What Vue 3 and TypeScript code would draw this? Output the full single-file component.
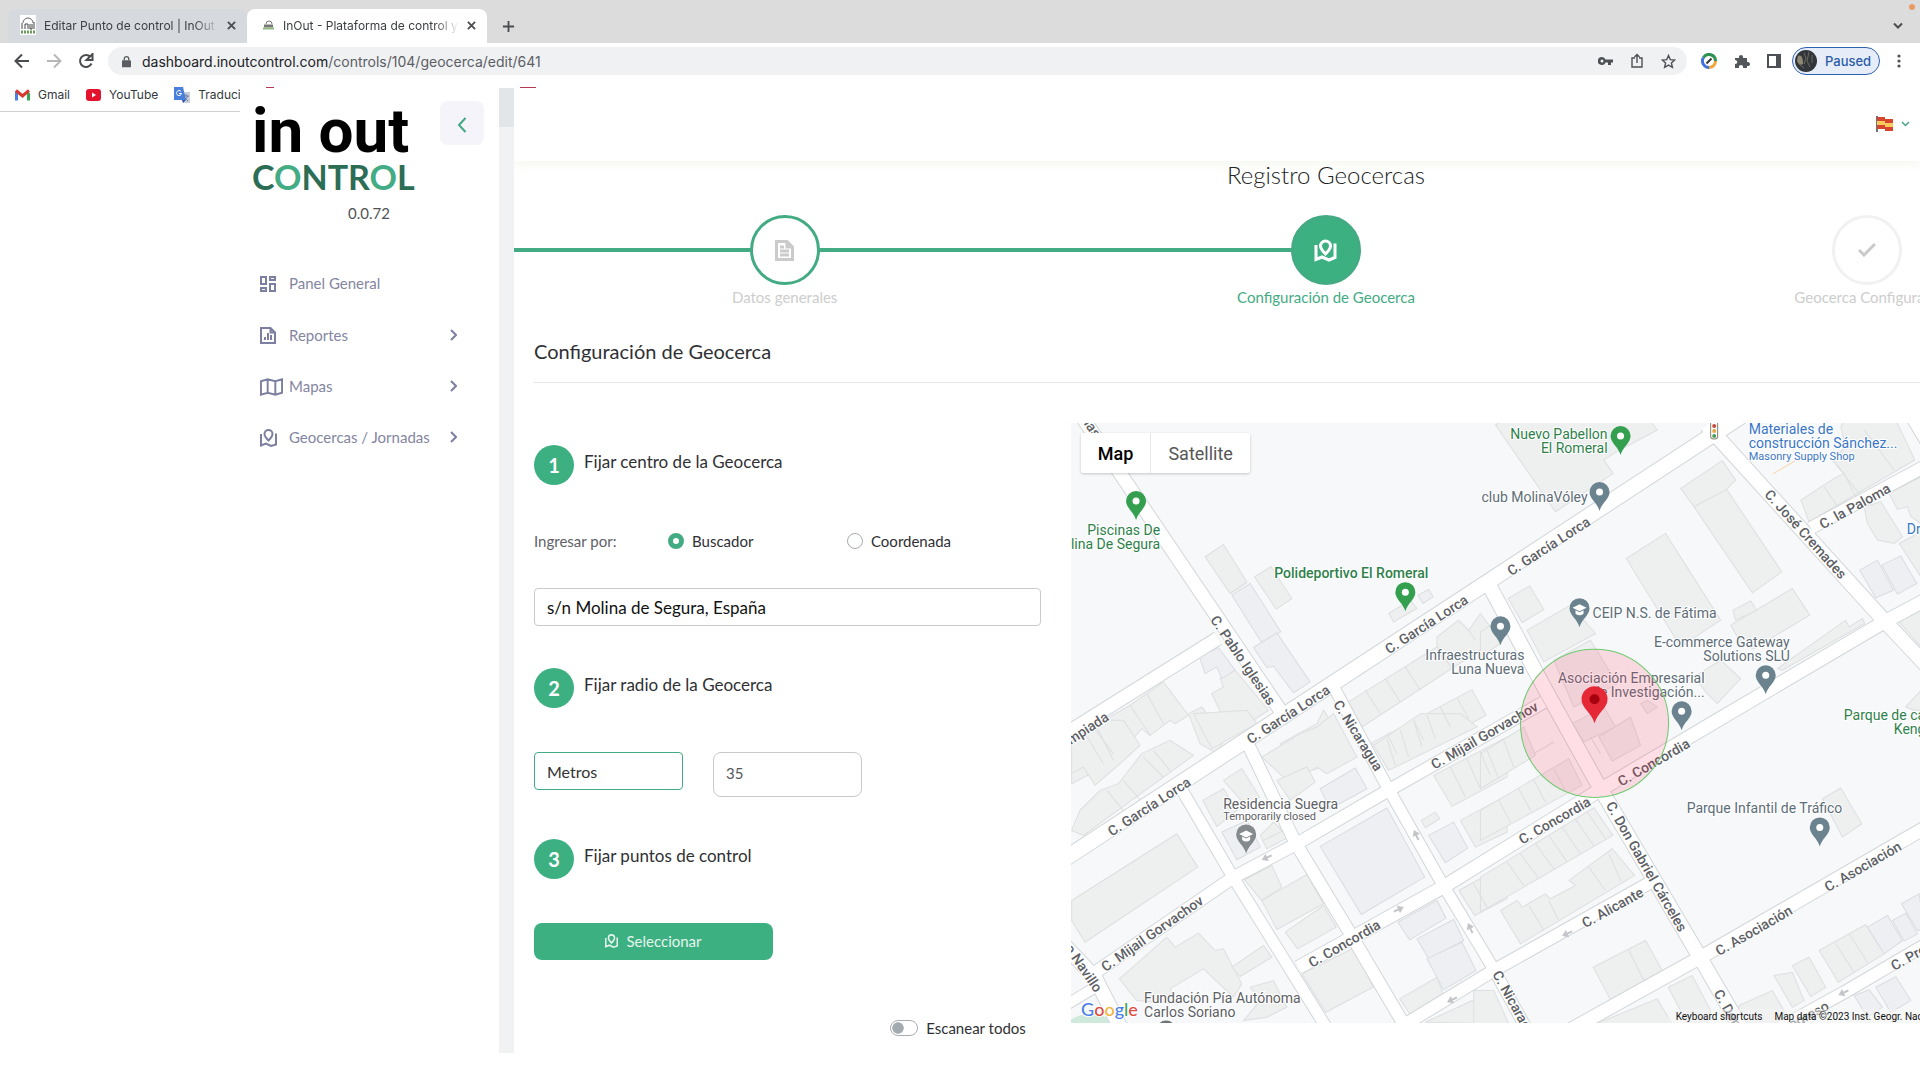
<script setup lang="ts">
import { ref } from 'vue'

interface Shape { x: number; y: number; items: string[] }
interface Label { x: number; y: number; text: string; tone: string; anchor?: string }
interface Street { x: number; y: number; a: number; text: string; anchor?: string }
interface Pin { x: number; y: number; color: string; school?: boolean }

const entryMode = ref('buscador')
const address = ref('s/n Molina de Segura, España')
const radius = ref('35')
const scanAll = ref(false)

const menu = [
  { text: 'Panel General', icon: 'panel', more: false },
  { text: 'Reportes', icon: 'report', more: true },
  { text: 'Mapas', icon: 'map', more: true },
  { text: 'Geocercas / Jornadas', icon: 'fence', more: true },
]

const steps = [
  { text: 'Datos generales', state: 'done' },
  { text: 'Configuración de Geocerca', state: 'current' },
  { text: 'Geocerca Configurada', state: 'pending' },
]

const roads: { d: string; w: number }[] = [
  { d: 'M1080 414L1280 710', w: 13 },
  { d: 'M1218 638L1060 737', w: 13 },
  { d: 'M1246 740L1295 842L1350 933L1406 1028', w: 12 },
  { d: 'M1333 686L1385 783L1440 880L1493 968L1527 1030', w: 11 },
  { d: 'M1182 790L1233 877L1328 1030', w: 11 },
  { d: 'M1060 940L1095 977L1122 1030', w: 14 },
  { d: 'M1060 1008L1098 985', w: 10 },
  { d: 'M1095 972L1233 877L1297 843L1388 790L1543 702', w: 12 },
  { d: 'M1298 967L1442 887L1602 788L1720 718L1883 622L1930 597', w: 13 },
  { d: 'M1487 582L1548 695L1598 785L1697 953L1742 1030', w: 14 },
  { d: 'M1648 883L1493 970L1396 1029', w: 12 },
  { d: 'M1930 824L1703 955L1570 1029', w: 13 },
  { d: 'M1930 941L1843 992L1774 1030', w: 12 },
  { d: 'M1706 425L1883 620L1930 670', w: 14 },
  { d: 'M1810 528L1930 463', w: 12 },
  { d: 'M1905 408L1935 458', w: 11 },
  { d: 'M1050 868L1487 582L1750 410', w: 15 },
]

const buildings: Shape[] = [
  { x: 1060, y: 410, items: [
    '435,440 490,403 560,515 510,550', '583,500 632,470 695,565 648,597', '985,610 1050,570 1070,595 1000,635',
    '455,850 490,830 480,805 525,780 625,900 525,965 495,935', '385,910 425,890 495,985 470,1030 420,1000',
    '865,875 1130,710 1130,680 1195,630 1225,660 1260,610 1290,650 1290,700 905,950', '930,1000 1235,838 1277,915 1050,1040',
    '35,985 210,885 310,815 385,915 345,940 330,930 270,975 245,955 215,990 190,1040 35,1120', '660,1000 770,940 790,900 830,960 890,1040 720,1090',
  ] },
  { x: 1480, y: 410, items: [
    '45,45 90,20 500,20 530,60 400,130 370,150 398,190 225,305', '600,235 725,152 765,210 738,238 903,485 815,548 640,290',
    '437,445 555,370 720,630 600,710', '750,645 935,535 987,615 820,715 785,705', '757,600 810,572 828,600 765,630',
    '83,565 148,527 190,598 125,637', '140,660 270,585 345,670 190,755', '220,750 330,690 410,820 280,890',
    '890,775 1095,630 1105,650 1145,625 1152,640 905,780', '960,270 1060,205 1090,190 1055,150 1095,110 1080,50 1100,20 1240,20 1302,150 985,335',
    '1150,290 1200,275 1265,380 1240,400 1190,390 1160,340', '1225,250 1320,200 1320,340 1290,320 1280,290 1250,298',
    '1255,400 1330,360 1330,510 1320,500', '1250,630 1330,590 1330,720', '640,800 720,750 780,805 710,880 680,850',
    '1275,890 1320,840 1330,900 1300,900', '0,665 40,640 60,700 0,740', '275,940 370,890 405,950 310,995', '480,880 500,870 530,890 500,910',
  ] },
  { x: 1060, y: 720, items: [
    '35,540 350,340 413,440 75,665 35,600', '490,180 545,145 598,230 560,260', '428,240 490,205 530,270 470,318',
    '600,345 640,305 685,350 620,385', '605,110 720,40 770,20 820,-20 890,110 800,160 770,140 690,190',
    '650,180 740,140 765,185 690,240', '553,478 635,435 665,500 605,540', '605,540 740,462 790,550 650,627', '675,635 790,555 828,620 712,685',
    '725,760 885,680 938,800 797,875', '178,775 320,650 345,680 415,638 465,690 490,685 545,790 520,830 430,745 330,805 350,850 230,840',
    '515,740 610,675 635,710 540,768', '1018,835 1130,770 1148,820 1048,880', '1083,300 1125,275 1138,295 1095,322',
    '1120,165 1340,50 1340,170 1175,258', '1200,300 1340,225 1340,335 1245,380', '1195,510 1340,430 1340,535 1243,585',
    '1095,905 1290,815 1320,870 1320,910', '940,75 1080,-20 1200,-20 1250,20 985,150', '35,330 60,270 120,210 175,190 245,100 330,60 400,105 70,345',
    '35,70 100,0 190,0 240,75 180,130 105,195 70,140 35,160', '400,-20 455,85 590,10 560,-30', '550,900 600,840 570,800 640,780 680,860 620,890',
  ] },
  { x: 1480, y: 720, items: [
    '60,570 110,540 125,560 195,520 210,535 285,495 265,480 395,385 462,465 120,670', '0,470 340,262 397,345 0,575',
    '0,270 265,115 305,195 0,360', '0,100 130,20 165,105 0,205', '338,740 495,660 545,750 390,838', '563,800 635,765 690,870 680,910 620,910',
    '345,910 530,835 575,910', '-20,810 40,810 85,910 -20,910', '1025,235 1080,203 1143,310 1085,350', '880,765 935,755 970,840 935,860',
    '935,735 985,710 1035,800 990,828', '1015,690 1155,612 1210,700 1073,785', '775,855 875,810 910,870 900,910 775,910', '355,50 450,-10 480,75 395,122',
  ] },
]

const coolBuildings: Shape[] = [
  { x: 1060, y: 410, items: ['515,555 570,520 662,665 605,698', '580,712 650,668 750,815 700,848 640,768 620,772', '1073,555 1105,538 1118,560 1088,580', '418,740 475,712 525,780 485,805 470,770 435,790'] },
  { x: 1480, y: 410, items: ['1137,480 1190,450 1238,540 1185,563', '1203,465 1260,437 1308,520 1250,552'] },
  { x: 1060, y: 720, items: ['780,378 980,263 1093,470 903,582', '485,335 560,300 600,380 530,418', '780,205 885,143 920,205 810,265', '1013,605 1130,540 1157,593 1048,658', '1070,655 1180,597 1210,660 1105,715', '1100,715 1205,665 1247,750 1150,808', '1105,345 1180,305 1222,383 1155,427'] },
  { x: 1480, y: 720, items: ['1160,620 1220,585 1265,660 1210,700', '1235,600 1275,578 1310,640 1270,662', '1262,550 1315,520 1330,625 1310,630', '1185,800 1245,768 1290,840 1230,875', '1120,825 1165,808 1205,860 1160,890'] },
]

const lots: Shape[] = [
  { x: 1060, y: 410, items: ['M915 840l45 70M975 805l45 70M1035 770l45 70M1130 710l45 65M1225 660l20 30M980 970l30 60M1060 930l30 60M1140 890l30 60M1190 862l35 65M210 885l60 90M260 850l50 90M100 950l60 80M510 550l50-32'] },
  { x: 1480, y: 410, items: ['M640 290l98-52M1030 230l45 65M1090 190l35 70M1055 150l80 100M1150 60l90 120'] },
  { x: 1060, y: 720, items: ['M980 55l25 80M1020 30l25 80M1060 0l25 80M1100-15l25 70M1170 140l45 90M1220 115l40 90M1260 95l30 70M1240 490l40 70M100 0l60 120M70 30l60 100M140 210l50 60M190 180l60 70M250 110l60 60M280 90l50 60M610 360l60-30'] },
  { x: 1480, y: 720, items: ['M80 425l50 70M120 400l55 75M165 370l55 75M205 345l55 80M245 320l55 80M285 297l55 80M320 275l55 80M55 240l35 65M115 205l35 65M160 180l35 65M220 145l35 65M20 90l35 85M70 60l30 80M145 555l45 75M205 540l30 60M325 440l50 70M385 400l35 80M445 690l45 90M1065 670l55 85M1105 640l55 85M330 50l30 50M160 100l60-35'] },
]

const arrows = [
  [1267, 857, 155], [1416, 835, 245], [1398, 909, -25], [1470, 928, 245], [1452, 999, 155], [1567, 933, 155], [1843, 992, 155],
]

const placeLabels: Label[] = [
  { x: 1160, y: 535, text: 'Piscinas De', tone: 'green', anchor: 'end' },
  { x: 1160, y: 549, text: 'lina De Segura', tone: 'green', anchor: 'end' },
  { x: 1274, y: 578, text: 'Polideportivo El Romeral', tone: 'green strong' },
  { x: 1607, y: 439, text: 'Nuevo Pabellon', tone: 'green', anchor: 'end' },
  { x: 1607, y: 453, text: 'El Romeral', tone: 'green', anchor: 'end' },
  { x: 1587, y: 502, text: 'club MolinaVóley', tone: 'slate', anchor: 'end' },
  { x: 1748, y: 434, text: 'Materiales de', tone: 'blue' },
  { x: 1748, y: 448, text: 'construcción Sánchez...', tone: 'blue' },
  { x: 1748, y: 460, text: 'Masonry Supply Shop', tone: 'blue small' },
  { x: 1906, y: 534, text: 'Dr', tone: 'blue' },
  { x: 1592, y: 618, text: 'CEIP N.S. de Fátima', tone: 'slate' },
  { x: 1789, y: 647, text: 'E-commerce Gateway', tone: 'slate', anchor: 'end' },
  { x: 1789, y: 661, text: 'Solutions SLU', tone: 'slate', anchor: 'end' },
  { x: 1704, y: 683, text: 'Asociación Empresarial', tone: 'slate', anchor: 'end' },
  { x: 1704, y: 697, text: 'de Investigación...', tone: 'slate', anchor: 'end' },
  { x: 1524, y: 660, text: 'Infraestructuras', tone: 'slate', anchor: 'end' },
  { x: 1524, y: 674, text: 'Luna Nueva', tone: 'slate', anchor: 'end' },
  { x: 1843, y: 720, text: 'Parque de ca', tone: 'green' },
  { x: 1893, y: 734, text: 'Keng', tone: 'green' },
  { x: 1223, y: 809, text: 'Residencia Suegra', tone: 'grey' },
  { x: 1223, y: 820, text: 'Temporarily closed', tone: 'grey small' },
  { x: 1686, y: 813, text: 'Parque Infantil de Tráfico', tone: 'slate' },
  { x: 1144, y: 1002, text: 'Fundación Pía Autónoma', tone: 'grey' },
  { x: 1144, y: 1016, text: 'Carlos Soriano', tone: 'grey' },
]

const streetLabels: Street[] = [
  { x: 1149, y: 806, a: -33, text: 'C. García Lorca' },
  { x: 1288, y: 714, a: -33, text: 'C. García Lorca' },
  { x: 1426, y: 624, a: -33, text: 'C. García Lorca' },
  { x: 1548, y: 546, a: -33, text: 'C. García Lorca' },
  { x: 1243, y: 660, a: 56, text: 'C. Pablo Iglesias' },
  { x: 1098, y: 436, a: 56, text: 'C. Pablo Iglesias', anchor: 'end' },
  { x: 1358, y: 735, a: 58, text: 'C. Nicaragua' },
  { x: 1496, y: 971, a: 61, text: 'C. Nicaragua', anchor: 'start' },
  { x: 1152, y: 933, a: -35, text: 'C. Mijail Gorvachov' },
  { x: 1484, y: 735, a: -30, text: 'C. Mijail Gorvachov' },
  { x: 1344, y: 943, a: -30, text: 'C. Concordia' },
  { x: 1554, y: 820, a: -30, text: 'C. Concordia' },
  { x: 1653, y: 762, a: -30, text: 'C. Concordia' },
  { x: 1646, y: 866, a: 60, text: 'C. Don Gabriel Cárceles' },
  { x: 1717, y: 990, a: 60, text: 'C. Don Gabriel Cárceles', anchor: 'start' },
  { x: 1612, y: 907, a: -29, text: 'C. Alicante' },
  { x: 1753, y: 930, a: -30, text: 'C. Asociación' },
  { x: 1862, y: 866, a: -30, text: 'C. Asociación' },
  { x: 1805, y: 534, a: 48, text: 'C. José Cremades' },
  { x: 1854, y: 506, a: -29, text: 'C. la Paloma' },
  { x: 1107, y: 715, a: -33, text: 'C. Olimpiada', anchor: 'end' },
  { x: 1099, y: 990, a: 56, text: 'Pedro Navillo', anchor: 'end' },
  { x: 1827, y: 1004, a: -28, text: 'C. Progreso', anchor: 'end' },
  { x: 1891, y: 966, a: -29, text: 'C. Progreso', anchor: 'start' },
]

const pins: Pin[] = [
  { x: 1136, y: 520, color: '#34a04f' },
  { x: 1405, y: 611, color: '#34a04f' },
  { x: 1620, y: 455, color: '#34a04f' },
  { x: 1599, y: 511, color: '#6b838e' },
  { x: 1579, y: 627, color: '#6b838e', school: true },
  { x: 1500, y: 645, color: '#6b838e' },
  { x: 1765, y: 694, color: '#6b838e' },
  { x: 1681, y: 730, color: '#6b838e' },
  { x: 1819, y: 846, color: '#6b838e' },
  { x: 1246, y: 853, color: '#858a8d', school: true },
  { x: 1166, y: 1049, color: '#6f7578' },
]

const brand = [
  { c: '#4a80e8', t: 'G' }, { c: '#dc4b41', t: 'o' }, { c: '#efb53c', t: 'o' },
  { c: '#4a80e8', t: 'g' }, { c: '#45a35d', t: 'l' }, { c: '#dc4b41', t: 'e' },
]
</script>

<template>
  <div class="window">
    <header class="chrome">
      <div class="tabs">
        <div class="tab idle">
          <svg class="fav" viewBox="0 0 16 20"><rect width="16" height="20" fill="#fff" /><path d="M3 8a5 5 0 0 1 10 0" fill="none" stroke="#666" /><path d="M2 8v6M5 14V9h3v5M10 9v5h2V9M14 7v7" fill="none" stroke="#444" /><path d="M1 17h14" stroke="#6a9a5a" stroke-width="3" stroke-dasharray="2 1" /></svg>
          <span class="tab-text">Editar Punto de control | InOut -</span>
          <button class="x" aria-label="Cerrar pestaña"><svg viewBox="0 0 10 10"><path d="M1 1l8 8M9 1L1 9" /></svg></button>
        </div>
        <div class="tab active">
          <svg class="fav small" viewBox="0 0 14 10"><path d="M5 4a3 3 0 0 1 6 0" fill="none" stroke="#777" /><path d="M3 4.500h9v3H3z" fill="#777" /><path d="M2 8.500h11" stroke="#8fb882" stroke-width="2" /></svg>
          <span class="tab-text">InOut - Plataforma de control y g</span>
          <button class="x" aria-label="Cerrar pestaña"><svg viewBox="0 0 10 10"><path d="M1 1l8 8M9 1L1 9" /></svg></button>
        </div>
        <button class="plus" aria-label="Nueva pestaña"><svg viewBox="0 0 14 14"><path d="M7 1v12M1 7h12" /></svg></button>
        <div class="tab-end"><i class="dot"></i><button class="down" aria-label="Buscar pestañas"><svg viewBox="0 0 12 8"><path d="M2 1.500l4 4 4-4" /></svg></button></div>
      </div>
      <div class="toolbar">
        <button class="ico" aria-label="Atrás"><svg viewBox="0 0 16 16"><path d="M15 8H2M8 1.500L1.500 8 8 14.500" /></svg></button>
        <button class="ico faded" aria-label="Adelante"><svg viewBox="0 0 16 16"><path d="M1 8h13M8 1.500L14.500 8 8 14.500" /></svg></button>
        <button class="ico" aria-label="Recargar"><svg viewBox="0 0 16 16"><path d="M13.500 10.500A6 6 0 1 1 12.500 4" /><path d="M14.500 1v6h-6z" fill="#4a4d50" stroke="none" /></svg></button>
        <div class="address">
          <svg class="lock" viewBox="0 0 10 13"><rect y="5" width="10" height="8" rx="1" fill="#5a5d61" /><path d="M2.500 5V3.500a2.500 2.500 0 0 1 5 0V5" fill="none" stroke="#5a5d61" stroke-width="1.500" /></svg>
          <p class="url">dashboard.inoutcontrol.com<span>/controls/104/geocerca/edit/641</span></p>
          <div class="address-tools">
            <svg width="15" height="16" viewBox="0 0 15 16"><path d="M4 4a4 4 0 1 0 3.500 5.500H10V12h3V9.500h2v-3H7.500A4 4 0 0 0 4 4zm0 5.500a1.500 1.500 0 1 1 0-3 1.500 1.500 0 0 1 0 3z" fill="#4d5156" /></svg>
            <svg width="12" height="16" viewBox="0 0 12 16"><path d="M4 5H1v9h10V5H8M6 10V2M3.500 4L6 1.500 8.500 4" fill="none" stroke="#4d5156" stroke-width="1.400" /></svg>
            <svg width="15" height="15" viewBox="0 0 15 15"><path d="M7.500 1.500l1.800 4.100 4.400.4-3.300 3 1 4.400-3.900-2.300-3.900 2.300 1-4.400-3.300-3 4.400-.4z" fill="none" stroke="#4d5156" stroke-width="1.400" /></svg>
          </div>
        </div>
        <svg class="ext" viewBox="0 0 16 16"><g fill="none" stroke-width="3"><path d="M2.500 4.500A6.500 6.500 0 0 1 14.500 8" stroke="#2d9254" /><path d="M14.500 8A6.500 6.500 0 0 1 8 14.500" stroke="#eca83a" /><path d="M8 14.500A6.500 6.500 0 0 1 2.500 4.500" stroke="#3f73df" /></g><path d="M5.500 10.500l5-5" stroke="#333" stroke-width="2" /></svg>
        <svg class="ext" viewBox="0 0 16 16"><path d="M1 5h4c-1-4 5-4 4 0h4v4c4-1 4 5 0 4v2H9c1-4-5-4-4 0H1v-4c3 0 3-4 0-4z" fill="#54575b" /></svg>
        <svg class="ext panel" viewBox="0 0 14 14"><rect x="1" y="1" width="12" height="12" fill="#fff" stroke="#4d5156" stroke-width="2" /><path d="M9 1h4v12H9z" fill="#4d5156" /></svg>
        <button class="profile">
          <svg viewBox="0 0 22 22"><circle cx="11" cy="11" r="11" fill="#32363a" /><path d="M3 6c4-2 5 3 5 8-3 2-6-1-6-4z" fill="#8d8974" /><path d="M9 3l2 5-2 6M14 2l-2 9 3 6M4 14l5 4M17 5v8" fill="none" stroke="#6d6b60" /></svg>
          Paused
        </button>
        <svg class="dots" viewBox="0 0 4 14"><circle cx="2" cy="2" r="1.600" /><circle cx="2" cy="7" r="1.600" /><circle cx="2" cy="12" r="1.600" /></svg>
      </div>
    </header>

    <div class="stage">
      <nav class="bookmarks" aria-label="Marcadores">
        <a href="#"><svg width="15" height="12" viewBox="0 0 15 12"><path d="M1.500 11.500V2" stroke="#4a80e8" stroke-width="3" /><path d="M13.500 11.500V4" stroke="#3ca457" stroke-width="3" /><path d="M1 1.500L7.500 7 14 1.500" fill="none" stroke="#d93a30" stroke-width="3" /></svg>Gmail</a>
        <a href="#"><svg width="15" height="12" viewBox="0 0 15 12"><rect width="15" height="12" rx="3" fill="#e5122d" /><path d="M6 3.500L10 6 6 8.500z" fill="#fff" /></svg>YouTube</a>
        <a href="#"><svg width="16" height="16" viewBox="0 0 16 16"><path d="M6 5h10v11H9z" fill="#c9cfd8" /><path d="M9 9h6M12 7v2M10 14l4-5M10 10l4 4" stroke="#6d7e93" fill="none" /><path d="M0 0h9l3 13H0z" fill="#4a80dc" /><path d="M7 4.500a2.500 2.500 0 1 0 .5 2H5" fill="none" stroke="#fff" /><path d="M8 13l1 3 3-3z" fill="#3355b0" /></svg>Traducir</a>
      </nav>

      <div class="page">
        <div class="peek"><i></i><i></i></div>
        <div class="app">
          <aside class="sidebar">
            <div class="brand">
              <div class="logo">
                <span class="logo-top">in out</span>
                <span class="logo-bottom">C<b>O</b>NTR<b>O</b>L</span>
              </div>
              <button class="collapse" aria-label="Contraer menú"><svg viewBox="0 0 10 16"><path d="M8.500 1L2 8l6.500 7" /></svg></button>
            </div>
            <p class="version">0.0.72</p>
            <nav class="menu" aria-label="Menú principal">
              <a v-for="m in menu" :key="m.text" href="#">
                <span class="menu-icon">
                  <svg v-if="m.icon === 'panel'" width="16" height="16" viewBox="0 0 16 16"><path d="M1 1h5v7H1zM10 1h5v3h-5zM10 8h5v7h-5zM1 12h5v3H1z" /></svg>
                  <svg v-else-if="m.icon === 'report'" width="16" height="17" viewBox="0 0 16 17"><path d="M1 1h9.500L15 5.500V16H1zM10.500 1v4.500H15M5 13v-3M8 13V6M11 13V8" /></svg>
                  <svg v-else-if="m.icon === 'map'" width="23" height="18" viewBox="0 0 24 18"><path d="M1 3l7-2 8 2 7-2v14l-7 2-8-2-7 2zM8 1v14M16 3v14" /></svg>
                  <svg v-else width="17" height="18" viewBox="0 0 17 18"><path d="M8.500 11.500C5 8 4.500 7 4.500 5a4 4 0 0 1 8 0c0 2-.5 3-4 6.500zM1 5v11.500l5-2 5 2.500 5-1.500V4.500" /></svg>
                </span>
                <span class="menu-text">{{ m.text }}</span>
                <svg v-if="m.more" class="caret" viewBox="0 0 7 12"><path d="M1 1l5 5-5 5" /></svg>
              </a>
            </nav>
          </aside>
          <div class="scroll"><i></i></div>

          <main class="main">
            <div class="topbar">
              <button class="lang" aria-label="Idioma">
                <svg width="17" height="16" viewBox="0 0 17 16"><path d="M1 0v16" stroke="#444" stroke-width="1.500" /><path d="M1 1h8v2h8v12H9v-2H1z" fill="#d8452f" /><path d="M1 5h8v2h8v4H9V9H1z" fill="#f8cb5c" /></svg>
                <svg class="lang-caret" width="9" height="6" viewBox="0 0 9 6"><path d="M1 1l3.500 3.500L8 1" /></svg>
              </button>
            </div>
            <div class="wide">
              <h1>Registro Geocercas</h1>
              <ol class="steps">
                <li v-for="s in steps" :key="s.text" :class="s.state">
                  <span class="bubble">
                    <svg v-if="s.state === 'done'" width="19" height="21" viewBox="0 0 19 21"><path d="M1.500 1.500H12l5.500 5.500v12.500h-16zM12 1.500V7h5.500M5 7h4M5 11h9M5 15h9" fill="none" stroke="#cbcbcb" stroke-width="3" /></svg>
                    <svg v-else-if="s.state === 'current'" width="23" height="23" viewBox="0 0 23 23"><path d="M11.500 15C7.500 11 6.500 9 6.500 7a5 5 0 0 1 10 0c0 2-1 4-5 8zM2 6v14.500l6-2.500 7 3 6-2.500V4.500" fill="none" stroke="#fff" stroke-width="3" /></svg>
                    <svg v-else width="18" height="14" viewBox="0 0 18 14"><path d="M1 7l5 5L17 1" fill="none" stroke="#cacaca" stroke-width="3" /></svg>
                  </span>
                  <span>{{ s.text }}</span>
                </li>
              </ol>

              <h2>Configuración de Geocerca</h2>
              <div class="columns">
                <form class="form" @submit.prevent>
                  <h3><span>1</span>Fijar centro de la Geocerca</h3>
                  <fieldset class="modes">
                    <legend>Ingresar por:</legend>
                    <label><input v-model="entryMode" type="radio" name="modo" value="buscador" />Buscador</label>
                    <label><input v-model="entryMode" type="radio" name="modo" value="coordenada" />Coordenada</label>
                  </fieldset>
                  <input v-model="address" class="search" type="text" aria-label="Dirección" />
                  <h3><span>2</span>Fijar radio de la Geocerca</h3>
                  <div class="radius">
                    <select aria-label="Unidad"><option>Metros</option></select>
                    <input v-model="radius" type="text" aria-label="Radio" />
                  </div>
                  <h3><span>3</span>Fijar puntos de control</h3>
                  <button class="pick" type="button">
                    <svg width="13" height="14" viewBox="0 0 17 18"><path d="M8.500 11.500C5 8 4.500 7 4.500 5a4 4 0 0 1 8 0c0 2-.5 3-4 6.500zM1 5v11.500l5-2 5 2.500 5-1.500V4.500" /></svg>
                    Seleccionar
                  </button>
                  <label class="switch"><input v-model="scanAll" type="checkbox" role="switch" />Escanear todos</label>
                </form>

                <div class="map">
                  <svg class="canvas" viewBox="1071 423 1046 600" preserveAspectRatio="xMinYMin slice">
                    <rect x="1071" y="423" width="1046" height="600" fill="#f6f8f9" />
                    <path d="M1071 1019Q1095 1005 1115 1023H1071z" fill="#cfeadd" />
                    <g v-for="g in buildings" :key="'b' + g.x + g.y" :transform="`translate(${g.x} ${g.y}) scale(.3333)`" fill="#eeefef" stroke="#dddfe0" stroke-width="3">
                      <polygon v-for="p in g.items" :key="p" :points="p" />
                    </g>
                    <g v-for="g in coolBuildings" :key="'c' + g.x + g.y" :transform="`translate(${g.x} ${g.y}) scale(.3333)`" fill="#eeeff2" stroke="#dadce1" stroke-width="3">
                      <polygon v-for="p in g.items" :key="p" :points="p" />
                    </g>
                    <g v-for="g in lots" :key="'l' + g.x + g.y" :transform="`translate(${g.x} ${g.y}) scale(.3333)`" fill="none" stroke="#dddfe0" stroke-width="3">
                      <path v-for="p in g.items" :key="p" :d="p" />
                    </g>
                    <g fill="none" stroke="#d3d6d9"><path v-for="r in roads" :key="r.d" :d="r.d" :stroke-width="r.w + 2" /></g>
                    <g fill="none" stroke="#fff"><path v-for="r in roads" :key="r.d" :d="r.d" :stroke-width="r.w" /></g>
                    <g v-for="a in arrows" :key="a.join()" :transform="`translate(${a[0]} ${a[1]}) rotate(${a[2]})`"><path d="M-5 0H3" stroke="#c3c5c9" stroke-width="2" /><path d="M0-4L6 0 0 4z" fill="#c3c5c9" /></g>
                    <path d="M1772 474l22-13" stroke="#f8d9b5" />
                    <g class="streets">
                      <text v-for="(s, i) in streetLabels" :key="i" :transform="`translate(${s.x} ${s.y}) rotate(${s.a})`" :text-anchor="s.anchor ?? 'middle'" dy="5">{{ s.text }}</text>
                    </g>
                    <g class="places">
                      <text v-for="l in placeLabels" :key="l.text" :x="l.x" :y="l.y" :class="l.tone" :text-anchor="l.anchor ?? 'start'">{{ l.text }}</text>
                    </g>
                    <circle cx="1594" cy="723" r="74" fill="#ff1f44" fill-opacity=".14" stroke="#6cc96c" stroke-width="1" />
                    <g v-for="p in pins" :key="p.x" :transform="`translate(${p.x} ${p.y})`">
                      <path d="M0 0C-2-8-10-12-10-19a10 10 0 0 1 20 0C10-12 2-8 0 0z" :fill="p.color" />
                      <path v-if="p.school" d="M-7-19.500L0-23l7 3.500-7 3.500zM-4-17v3.500q4 3 8 0V-17l-4 2z" fill="#fff" />
                      <circle v-else cy="-19" r="3.500" fill="#fff" />
                    </g>
                    <g transform="translate(1594 723)"><path d="M0 0C-3-11-13-15-13-24a13 13 0 0 1 26 0C13-15 3-11 0 0z" fill="#e52836" /><circle cy="-24" r="5" fill="#a6000f" /></g>
                    <g><rect x="1710" y="420" width="7" height="19" rx="3" fill="#fff" stroke="#86806e" /><circle cx="1713.500" cy="426" r="2" fill="#c84a40" /><circle cx="1713.500" cy="431" r="2" fill="#e7a743" /><circle cx="1713.500" cy="436" r="2" fill="#4b9d5b" /></g>
                    <text class="brand-mark" x="1081" y="1015"><tspan v-for="(b, i) in brand" :key="i" :fill="b.c">{{ b.t }}</tspan></text>
                  </svg>
                  <div class="map-type"><button class="on">Map</button><button>Satellite</button></div>
                  <div class="credits"><button>Keyboard shortcuts</button><span>Map data ©2023 Inst. Geogr. Nacional</span></div>
                </div>
              </div>
            </div>
          </main>
        </div>
      </div>
    </div>
  </div>
</template>

<style>
body {
  background: #fff;
  overflow: hidden;
}
</style>

<style scoped>
* {
  box-sizing: border-box;
}

.window {
  font-family: Lato, "Open Sans", sans-serif;
  color: #2f3034;
  overflow: hidden;
}

button {
  font: inherit;
  color: inherit;
  border: 0;
  padding: 0;
  background: none;
}

svg {
  flex: none;
}

a {
  color: inherit;
  text-decoration: none;
}

h1, h2, h3, p, ol {
  margin: 0;
  padding: 0;
  font-weight: 400;
}

/* Browser frame */
.chrome {
  font-family: Inter, sans-serif;
}

.tabs {
  height: 43px;
  background: #dcdcdc;
  display: flex;
  align-items: flex-end;
}

.tab {
  height: 34px;
  display: flex;
  align-items: center;
  gap: 8px;
  font-size: 12px;
  color: #3c4043;
  padding: 0 11px 2px 12px;
}

.idle {
  width: 239px;
  margin-left: 8px;
  background: #d6d9dd;
  border-radius: 8px 8px 0 0;
}

.active {
  width: 240px;
  background: #fff;
  border-radius: 8px 8px 0 0;
  padding-left: 14px;
}

.tab-text {
  flex: 1;
  overflow: hidden;
  white-space: nowrap;
  mask-image: linear-gradient(90deg, #000 86%, transparent);
}

.fav {
  width: 16px;
  height: 20px;
}

.small.fav {
  width: 14px;
  height: 10px;
}

.x svg {
  width: 9px;
  height: 9px;
  display: block;
}

.x path, .plus path, .down path, .ico path {
  fill: none;
  stroke: #4a4d50;
  stroke-width: 2;
}

.plus {
  margin: 0 0 10px 15px;
}

.plus svg {
  width: 13px;
  height: 13px;
  display: block;
}

.tab-end {
  margin-left: auto;
  display: flex;
  flex-direction: column;
  align-items: flex-end;
  gap: 12px;
  padding: 0 5px 13px 0;
}

.dot {
  width: 6px;
  height: 6px;
  border-radius: 50%;
  background: #ea9a62;
}

.down {
  margin-right: 11px;
}

.down svg {
  width: 12px;
  height: 8px;
  display: block;
}

.toolbar {
  height: 37px;
  display: flex;
  align-items: center;
  padding: 0 19px 1px 14px;
}

.ico {
  margin-right: 16px;
}

.ico svg {
  width: 16px;
  height: 16px;
  display: block;
}

.faded {
  opacity: .4;
}

.address {
  flex: 1;
  height: 28px;
  border-radius: 14px;
  background: #f0f1f3;
  display: flex;
  align-items: center;
  padding: 0 11px 0 14px;
  margin-right: 14px;
}

.ico + .address {
  margin-left: -2px;
}

.lock {
  width: 9px;
  height: 13px;
  margin-right: 11px;
}

.url {
  font-size: 14px;
  color: #202124;
}

.url span {
  color: #5b5e63;
}

.address-tools {
  margin-left: auto;
  display: flex;
  align-items: center;
  gap: 18px;
}

.ext {
  width: 16px;
  height: 16px;
  margin-right: 17px;
}

.panel {
  width: 14px;
  height: 14px;
  margin-right: 11px;
}

.profile {
  width: 88px;
  height: 28px;
  border: 1px solid #2e62ad;
  border-radius: 14px;
  background: #e6edf9;
  display: flex;
  align-items: center;
  gap: 8px;
  padding-left: 2px;
  font-size: 13px;
  font-weight: 500;
  color: #2b5ca8;
  margin-right: 17px;
}

.profile svg {
  width: 22px;
  height: 22px;
}

.dots {
  width: 4px;
  height: 14px;
  fill: #4d5156;
}

.stage {
  display: flex;
  align-items: flex-start;
}

.bookmarks {
  flex: 0 0 240px;
  height: 32px;
  border-bottom: 1px solid #cfd0d2;
  display: flex;
  align-items: center;
  gap: 16px;
  padding: 0 0 2px 15px;
  overflow: hidden;
  font: 12px Inter, sans-serif;
  color: #35383b;
}

.bookmarks a {
  display: flex;
  align-items: center;
  gap: 8px;
}

.page {
  flex: 1;
  min-width: 0;
}

.peek {
  height: 8px;
  display: flex;
  align-items: flex-end;
  padding-left: 26px;
  gap: 246px;
}

.peek i {
  width: 8px;
  height: 1px;
  background: #b8385a;
}

.peek i + i {
  width: 16px;
}

.app {
  display: flex;
}

/* Sidebar */
.sidebar {
  flex: 0 0 259px;
  padding: 13px 15px 0 12px;
}

.brand {
  display: flex;
  justify-content: space-between;
  align-items: flex-start;
}

.logo {
  display: flex;
  flex-direction: column;
  white-space: nowrap;
  width: 164px;
}

.logo-top {
  font: 700 62px/60px Roboto, sans-serif;
  color: #000;
}

.logo-bottom {
  font-size: 34px;
  font-weight: 700;
  line-height: 32px;
  color: #2c6d55;
}

.logo-bottom b {
  font-weight: 700;
  color: #43ac84;
}

.collapse {
  width: 44px;
  height: 44px;
  border-radius: 8px;
  background: #f4f4fa;
  display: flex;
  align-items: center;
  justify-content: center;
  padding-top: 3px;
}

.collapse svg {
  width: 10px;
  height: 16px;
}

.collapse path {
  fill: none;
  stroke: #43a883;
  stroke-width: 2;
}

.version {
  text-align: center;
  font-size: 15px;
  line-height: 20px;
  padding-left: 2px;
  margin-top: 10px;
  color: #505256;
}

.menu {
  margin-top: 34px;
}

.menu a {
  height: 52px;
  display: flex;
  align-items: center;
  font-size: 15px;
  color: #84869f;
}

.menu a + a {
  height: 51px;
}

.menu-icon {
  width: 37px;
  padding: 2px 0 0 8px;
  display: flex;
}

.menu-icon path, .caret path {
  fill: none;
  stroke: #7d7fa0;
  stroke-width: 2;
}

.menu-text {
  flex: 1;
}

.caret {
  width: 7px;
  height: 12px;
  margin-right: 27px;
}

.scroll {
  flex: 0 0 15px;
  background: #f1f2f4;
}

.scroll i {
  display: block;
  height: 39px;
  background: #e3e6e8;
}

/* Main column */
.main {
  flex: 1;
  min-width: 0;
  overflow: hidden;
}

.topbar {
  height: 73px;
  display: flex;
  justify-content: flex-end;
  align-items: center;
  padding: 0 10px 2px 0;
  box-shadow: 0 4px 10px #f6f8f1;
}

.lang {
  display: flex;
  align-items: center;
  gap: 8px;
}

.lang-caret path {
  fill: none;
  stroke: #43a883;
  stroke-width: 1.500;
}

.wide {
  width: 115.5%;
  padding-bottom: 15px;
}

h1 {
  text-align: center;
  font-size: 24px;
  line-height: 28px;
  font-weight: 300;
  color: #222;
}

.steps {
  display: flex;
  list-style: none;
  margin-top: 26px;
}

.steps li {
  flex: 1;
  display: flex;
  flex-direction: column;
  align-items: center;
  gap: 2px;
  font-size: 15px;
  line-height: 20px;
  color: #cdcdcd;
  background: linear-gradient(#43ab83, #43ab83) 0 33px / 100% 4px no-repeat;
}

.steps .current {
  color: #43ab83;
  background-size: 50% 4px;
}

.steps .pending {
  background: none;
}

.bubble {
  width: 70px;
  height: 70px;
  border-radius: 50%;
  border: 3px solid #43ab83;
  background: #fff;
  display: flex;
  align-items: center;
  justify-content: center;
}

.current .bubble {
  background: #3db082;
}

.pending .bubble {
  border-color: #f1f1f1;
}

h2 {
  margin: 31px 20px 0;
  padding-bottom: 18px;
  border-bottom: 1px solid #e3e4e5;
  font-size: 20px;
  line-height: 26px;
}

.columns {
  display: flex;
  gap: 30px;
  padding: 40px 20px 0;
}

.form {
  width: 32%;
  padding-top: 22px;
}

h3 {
  display: flex;
  gap: 10px;
  font-size: 17px;
  line-height: 34px;
  height: 40px;
}

h3 span {
  width: 40px;
  height: 40px;
  border-radius: 50%;
  background: #3db082;
  color: #fff;
  font-size: 20px;
  font-weight: 700;
  display: flex;
  align-items: center;
  justify-content: center;
}

.modes {
  border: 0;
  padding: 0;
  margin: 46px 0 37px;
  display: flex;
  align-items: center;
  height: 20px;
  font-size: 15px;
}

.modes legend {
  float: left;
  width: 134px;
  padding: 0;
  color: #606266;
}

.modes label {
  width: 179px;
  display: flex;
  align-items: center;
  gap: 8px;
}

.modes input {
  appearance: none;
  width: 16px;
  height: 16px;
  margin: 0;
  border-radius: 50%;
  border: 1px solid #a8abae;
}

.modes input:checked {
  border: 5px solid #43ab83;
}

.search, .radius select, .radius input {
  appearance: none;
  border: 1px solid #c9cacc;
  border-radius: 4px;
  height: 38px;
  padding: 0 12px;
  font: 17px Lato, sans-serif;
  background: #fff;
  color: #111;
}

.search {
  width: 100%;
  display: block;
  margin-bottom: 42px;
}

.radius {
  display: flex;
  align-items: flex-start;
  gap: 30px;
  margin: 44px 0 42px;
}

.radius select {
  width: 149px;
  border-color: #43ab83;
  color: #333;
  font-size: 16px;
}

.radius input {
  width: 149px;
  height: 45px;
  border-radius: 8px;
  padding-bottom: 3px;
  font-size: 15px;
  color: #55575b;
}

.pick {
  width: 239px;
  height: 37px;
  border-radius: 8px;
  background: #3db082;
  color: #e4f5ed;
  font-size: 15px;
  display: flex;
  align-items: center;
  justify-content: center;
  gap: 8px;
  margin-top: 44px;
  padding-bottom: 2px;
}

.pick path {
  fill: none;
  stroke: #e4f5ed;
  stroke-width: 2;
}

.switch {
  display: flex;
  justify-content: flex-end;
  align-items: center;
  gap: 8px;
  margin: 58px 15px 0 0;
  font-size: 15px;
  line-height: 20px;
}

.switch input {
  appearance: none;
  width: 28px;
  height: 16px;
  margin: 0;
  border: 1px solid #a9acaf;
  border-radius: 8px;
  background: radial-gradient(circle 6px at 7px 7px, #a4abb0 90%, transparent);
}

/* Map */
.map {
  flex: 1;
  min-width: 0;
  height: 600px;
  position: relative;
  overflow: hidden;
  font-family: Roboto, sans-serif;
}

.canvas {
  width: 100%;
  height: 100%;
  display: block;
}

.streets text, .places text {
  font: 14px Roboto, sans-serif;
  fill: #5d6065;
  stroke: #fff;
  stroke-width: 2;
  paint-order: stroke;
}

.streets text {
  font-weight: 500;
}

.places .green {
  fill: #2f7f4b;
}

.places .strong {
  font-weight: 500;
}

.places .blue {
  fill: #3a76c6;
}

.places .slate {
  fill: #5d6d77;
}

.places .small {
  font-size: 11px;
}

.brand-mark {
  font: 500 18px Lato, sans-serif;
  stroke: #fff;
  stroke-width: 2;
  paint-order: stroke;
}

.map-type {
  position: absolute;
  left: 10px;
  top: 10px;
  display: flex;
  height: 40px;
  background: #fff;
  border-radius: 2px;
  box-shadow: 0 1px 3px #00000033;
}

.map-type button {
  padding: 0 17px;
  font-size: 18px;
  color: #565656;
}

.map-type .on {
  font-weight: 500;
  color: #000;
  border-right: 1px solid #e6e6e6;
}

.credits {
  position: absolute;
  left: 57%;
  right: 0;
  bottom: 0;
  height: 14px;
  padding-left: 8px;
  display: flex;
  align-items: center;
  gap: 12px;
  font-size: 10px;
  color: #111;
  background: #f5f5f580;
  white-space: nowrap;
}
</style>
